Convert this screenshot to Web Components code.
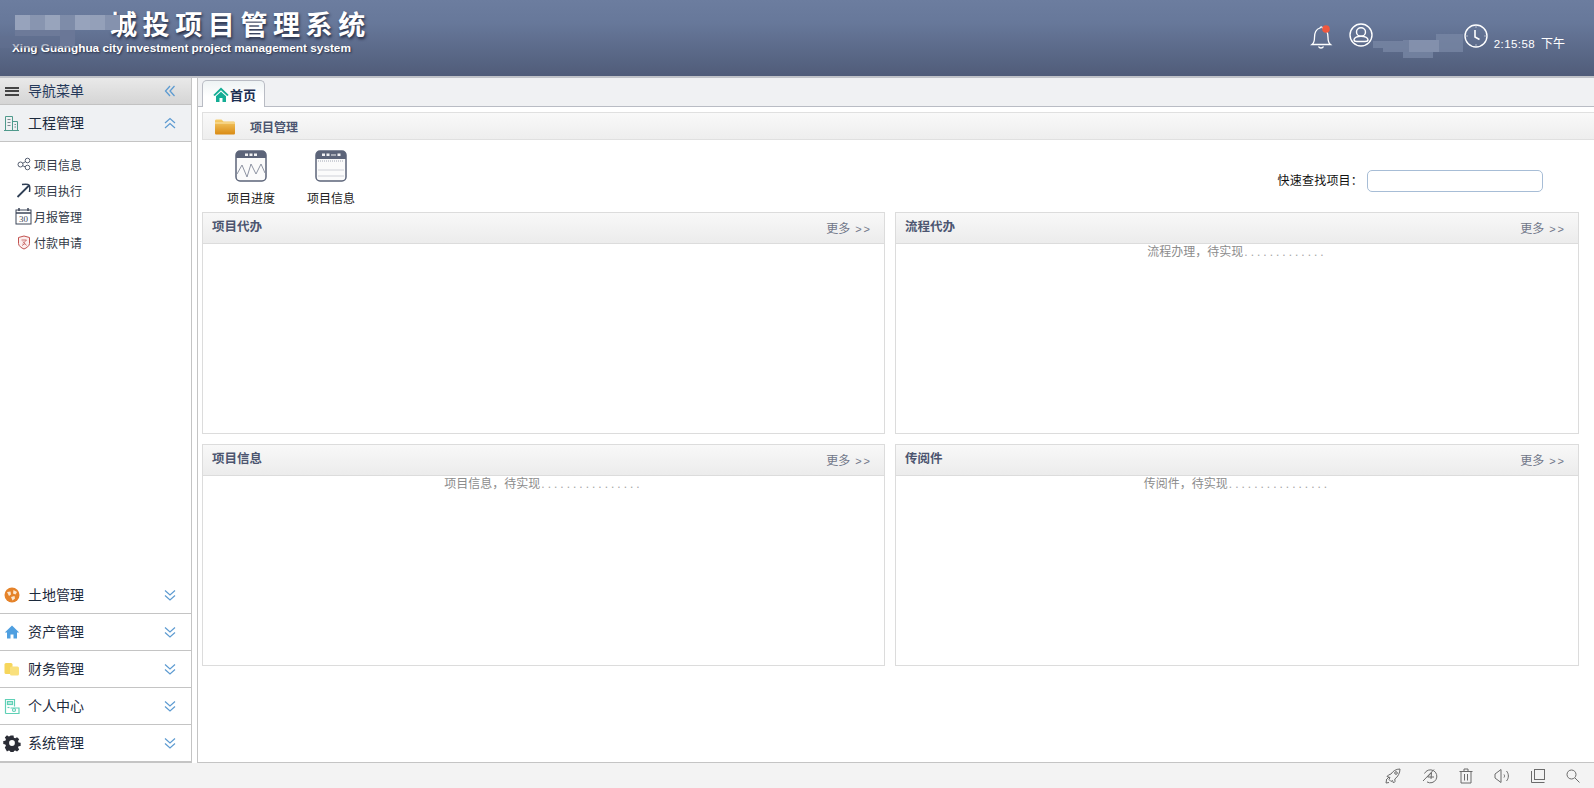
<!DOCTYPE html>
<html lang="zh">
<head>
<meta charset="utf-8">
<title>项目管理系统</title>
<style>
  html, body { margin: 0; padding: 0; height: 100%; overflow: hidden; background: #fff; }
  body { font-family: "Noto Sans CJK SC", "Liberation Sans", sans-serif; font-size: 12px; }
  .page { display: flex; flex-direction: column; height: 788px; }
  .middle { flex: 1; display: flex; min-height: 0; }
</style>
</head>
<body>
<div class="page">
  <app-header></app-header>
  <div class="middle">
    <side-nav>
      <nav-group label="工程管理" open>
        <svg slot="icon" width="18" height="18" viewBox="0 0 18 18" fill="none" stroke="#4f9a8c"><path d="M2.5 16.5V2.5h7v14M9.500 7.500h5v9M1 16.500h15"/><path d="M4.500 5.500h3M4.500 8.500h3M4.500 11.500h3M11.500 10.500h1.500M11.500 13h1.500" stroke="#7a8a90"/></svg>
        <nav-item label="项目信息">
          <svg slot="icon" width="14" height="14" viewBox="0 0 14 14" fill="none" stroke="#555e70"><circle cx="3.500" cy="7.500" r="2.500"/><circle cx="10.500" cy="3.500" r="2.300"/><circle cx="10.500" cy="10.500" r="2.300"/><path d="M5.700 6.300l2.800-1.700M5.700 8.700l2.800 1.300"/></svg>
        </nav-item>
        <nav-item label="项目执行">
          <svg slot="icon" width="16" height="16" viewBox="0 0 16 16" fill="none" stroke="#2f3f55" stroke-width="1.800"><path d="M1.500 15L13 3.500"/><path d="M6 2.500c3.500-.5 6-.5 7 .5s1 3.500.5 7" stroke-width="1.500"/></svg>
        </nav-item>
        <nav-item label="月报管理">
          <svg slot="icon" width="17" height="18" viewBox="0 0 17 18" fill="none" stroke="#3c4658"><rect x="1" y="3" width="15" height="14"/><path d="M1 6h15" stroke-width="1.500"/><path d="M4 1v3M13 1v3" stroke-width="1.500"/><text x="8.500" y="15" text-anchor="middle" font-size="9" font-family="Liberation Serif" fill="#3c4658" stroke="none">30</text></svg>
        </nav-item>
        <nav-item label="付款申请">
          <svg slot="icon" width="14" height="15" viewBox="0 0 14 15" fill="#fbeeee" stroke="#c2524f"><path d="M1.500 2.500l5.500-1.500 5.500 1.500v6c0 2.500-3 4.500-5.500 5.500-2.500-1-5.500-3-5.500-5.500z"/><path d="M4.500 5h5L6 8.500M6 6.500l3.500 4M8 8.500l-3 2" stroke-width=".8" fill="none"/></svg>
        </nav-item>
      </nav-group>
      <nav-group label="土地管理">
        <svg slot="icon" width="16" height="16" viewBox="0 0 16 16"><circle cx="8" cy="8" r="7.500" fill="#e5832a"/><path d="M3 5l3.500-.5.500 3-2 1.500zM9.500 3l3.500 2-1.500 2.500-2.500-1zM7 10l3.500-1 .5 2.500-2.500 2z" fill="#fbe7d0"/></svg>
      </nav-group>
      <nav-group label="资产管理">
        <svg slot="icon" width="16" height="16" viewBox="0 0 16 16" fill="#4f9fe0"><path d="M8 1.500L.8 8.500h2.200v6h3.500v-4h3v4H13v-6h2.200z"/></svg>
      </nav-group>
      <nav-group label="财务管理">
        <svg slot="icon" width="16" height="16" viewBox="0 0 16 16"><rect x=".5" y="2" width="8" height="11" rx="1.500" fill="#f6d65c"/><rect x="6" y="5.500" width="9" height="9" rx="1.500" fill="#f9e07d"/></svg>
      </nav-group>
      <nav-group label="个人中心">
        <svg slot="icon" width="16" height="17" viewBox="0 0 16 17" fill="none" stroke="#5fd0b6" stroke-width="1.200"><path d="M1.500 15.500V1.500h9v7M1.500 15.500h13.500V10H6.500"/><rect x="3.500" y="3.500" width="5" height="3" fill="#bfeee2"/><circle cx="10" cy="12" r="1.500"/><path d="M3.500 9.500h2" /></svg>
      </nav-group>
      <nav-group label="系统管理">
        <svg slot="icon" width="18" height="18" viewBox="0 0 18 18"><path fill="#2b2d36" fill-rule="evenodd" d="M7.300 .8h3.400l.4 2.300 1.500.7 2-1.300 2.400 2.400-1.300 2 .6 1.500 2.300.4v3.400l-2.300.4-.6 1.500 1.300 2-2.400 2.400-2-1.300-1.500.6-.4 2.300H7.300l-.4-2.300-1.500-.6-2 1.300L1 14.100l1.300-2-.7-1.500L-.7 10.200V6.800L1.600 6.400l.7-1.500L1 2.900 3.400 .5l2 1.300 1.500-.7zM9 5.800a3 3 0 1 0 0 6.400 3 3 0 0 0 0-6.400z" transform="translate(.9 .9) scale(.9)"/></svg>
      </nav-group>
    </side-nav>
    <home-main></home-main>
  </div>
  <status-bar></status-bar>
</div>

<script>
  // main page header
  class AppHeader extends HTMLElement {
    constructor() {
      super();
      this.attachShadow({ mode: 'open' });
      this.shadowRoot.innerHTML = `
<style>
  :host { display: flex; flex: none; height: 76px; border-bottom: 2px solid #c0c2c8; color: #fff;
    position: relative; justify-content: space-between;
    background: linear-gradient(#6c7d9f 0, #67789a 30%, #505c79 100%); }
  .brand { padding: 8px 0 0 12px; }
  .title { height: 32px; line-height: 32px; padding-left: 98px; font-size: 27px; font-weight: 700; letter-spacing: 5.600px;
    white-space: nowrap; text-shadow: 1px 2px 3px rgba(20,25,45,.8); font-family: "Noto Sans CJK SC", sans-serif; }
  .sub { font: bold 11.800px/14px "Liberation Sans", sans-serif; margin-top: 1px; text-shadow: 1px 1px 2px rgba(20,25,45,.7); white-space: nowrap; }
  .mosaic { position: absolute; left: 0; top: 12px; }
  .tools { display: flex; align-items: flex-start; padding: 22px 29px 0 0; }
  .bell { margin-right: 15px; }
  .user { margin-top: 1px; }
  .name-mask { width: 90px; margin: 10px 0 0 0; height: 26px; }
  .clock { margin: 2px 0 0 1px; }
  .time { font: 11.500px/14px "Liberation Sans", sans-serif; letter-spacing: .4px; margin: 14px 0 0 6px; white-space: nowrap; }
  .time span { font: 12px/14px "Noto Sans CJK SC", sans-serif; letter-spacing: 0; margin-left: 6px; }
</style>
<div class="brand">
  <div class="title">城投项目管理系统</div>
  <div class="sub">Xing Guanghua city investment project management system</div>
</div>
<svg class="mosaic" width="125" height="36" viewBox="0 0 125 36">
  <rect x="0" y="24" width="75" height="12" fill="#626f90" opacity=".5"/>
  <rect x="15" y="3" width="15" height="15" fill="#97a3bc"/><rect x="30" y="3" width="15" height="15" fill="#8895b0"/>
  <rect x="45" y="3" width="15" height="15" fill="#98a4bc"/><rect x="60" y="3" width="15" height="15" fill="#7e8ca9"/>
  <rect x="75" y="3" width="15" height="15" fill="#97a3bc"/><rect x="90" y="3" width="15" height="15" fill="#94a0b9"/>
  <rect x="105" y="3" width="15" height="15" fill="#8592ae"/><rect x="15" y="18" width="60" height="6" fill="#6d7a99"/>
  <rect x="60" y="18" width="15" height="16" fill="#6a7797"/>
</svg>
<div class="tools">
  <svg class="bell" width="24" height="28" viewBox="0 0 24 28" fill="none" stroke="#fff" stroke-width="1.300">
    <path d="M2 22.500c2-1.500 2.500-3.500 2.500-7 0-5 2-8.500 5.500-9.500.5-1.500 2-1.500 2.500 0 3.500 1 5.500 4.500 5.500 9.500 0 3.500.5 5.500 2.500 7z"/>
    <path d="M8.500 24.500c1 2 4 2 5 0"/>
    <circle cx="16" cy="7" r="3.800" fill="#f0573d" stroke="none"/>
  </svg>
  <svg class="user" width="24" height="24" viewBox="0 0 24 24" fill="none" stroke="#fff" stroke-width="1.400">
    <circle cx="12" cy="12" r="11"/><ellipse cx="12" cy="9" rx="4.500" ry="4.200"/><path d="M12 13.200c-3.500 0-7 1.500-7 3.500 0 1.200 1.500 1.800 3 1.800h8c1.500 0 3-.6 3-1.800 0-2-3.500-3.500-7-3.500z"/>
  </svg>
  <svg class="name-mask" viewBox="0 0 90 26">
    <path d="M0 9h30v-1h33v-6h27v18h-30v6H30v-6H10v-4H0z" fill="#7a88a6" opacity=".75"/>
    <rect x="36" y="8" width="30" height="12" fill="#8a97b2" opacity=".7"/>
  </svg>
  <svg class="clock" width="24" height="24" viewBox="0 0 24 24" fill="none" stroke="#fff">
    <circle cx="12" cy="12" r="11" stroke-width="1.400"/><path d="M11 6v7l4.500 2.500" stroke-width="1.600"/>
    <path d="M12 2.500v1M12 20.500v1M2.500 12h1M20.500 12h1"/>
  </svg>
  <div class="time">2:15:58<span>下午</span></div>
</div>`;
    }
  }
  customElements.define('app-header', AppHeader);

  // left side accordion
  class SideNav extends HTMLElement {
    constructor() {
      super();
      this.attachShadow({ mode: 'open' });
      this.shadowRoot.innerHTML = `
<style>
  :host { display: flex; flex-direction: column; flex: none; width: 191px; border-right: 1px solid #c4c4c4; border-bottom: 1px solid #c4c4c4; background: #fff; }
  .head { flex: none; height: 26px; display: flex; align-items: center; background: linear-gradient(#e9e9e9, #d5d5d5); border-bottom: 1px solid #c2c2c2; color: #234; font-size: 14px; }
  .bars { width: 14px; height: 9px; margin: 0 10px 0 5px; border-top: 2px solid #444; border-bottom: 2px solid #444; position: relative; box-sizing: border-box; }
  .bars::after { content: ""; position: absolute; left: 0; right: 0; top: 1.500px; height: 2px; background: #444; }
  .head span { flex: 1; margin: -2px 0 0 -1px; color: #25395a; }
  .head svg { margin-right: 15px; }
  .list { flex: 1; display: flex; flex-direction: column; min-height: 0; }
</style>
<div class="head"><i class="bars"></i><span>导航菜单</span>
  <svg width="12" height="12" viewBox="0 0 12 12" fill="none" stroke="#5d9bd1" stroke-width="1.300"><path d="M6 1L1.500 6 6 11M10.500 1L6 6l4.500 5"/></svg>
</div>
<div class="list"><slot></slot></div>`;
    }
  }
  customElements.define('side-nav', SideNav);

  class NavGroup extends HTMLElement {
    constructor() {
      super();
      this.attachShadow({ mode: 'open' });
      let open = this.hasAttribute('open');
      let arrow = open ? 'M1 6l5-4.500L11 6M1 11l5-4.500L11 11' : 'M1 1.500l5 4.500 5-4.500M1 6.500l5 4.500 5-4.500';
      this.shadowRoot.innerHTML = `
<style>
  :host { display: flex; flex-direction: column; flex: none; }
  :host([open]) { flex: 1; min-height: 0; }
  .row { flex: none; height: 36px; display: flex; align-items: center; border-bottom: 1px solid #c4c4c4; color: #1c2a3c; font-size: 14px; background: #fff; }
  :host([open]) .row { background: #eff1f3; }
  .label { flex: 1; margin-top: -2px; }
  .ico { display: flex; justify-content: center; flex: none; box-sizing: border-box; width: 23px; margin-right: 5px; }
  .row svg.arrow { margin-right: 15px; }
  .items { flex: 1; padding-top: 9px; }
  :host(:not([open])) .items { display: none; }
</style>
<div class="row"><span class="ico"><slot name="icon"></slot></span><span class="label"></span>
  <svg class="arrow" width="12" height="12" viewBox="0 0 12 12" fill="none" stroke="#5d9bd1" stroke-width="1.200"><path d="${arrow}"/></svg>
</div>
<div class="items"><slot></slot></div>`;
      this.shadowRoot.querySelector('.label').textContent = this.getAttribute('label');
    }
  }
  customElements.define('nav-group', NavGroup);

  class NavItem extends HTMLElement {
    constructor() {
      super();
      this.attachShadow({ mode: 'open' });
      this.shadowRoot.innerHTML = `
<style>
  :host { display: flex; align-items: center; height: 26px; font-size: 12px; color: #333b48; padding-left: 13px; }
  .ico { width: 21px; display: flex; justify-content: center; flex: none; }
</style>
<span class="ico"><slot name="icon"></slot></span><span class="label"></span>`;
      this.shadowRoot.querySelector('.label').textContent = this.getAttribute('label');
    }
  }
  customElements.define('nav-item', NavItem);

  // gray title bar with "more" link over an empty body
  class InfoPanel extends HTMLElement {
    constructor() {
      super();
      this.attachShadow({ mode: 'open' });
      this.shadowRoot.innerHTML = `
<style>
  :host { display: flex; flex-direction: column; height: 222px; border: 1px solid #dcdcdc; box-sizing: border-box; background: #fff; min-width: 0; }
  .top { flex: none; height: 30px; display: flex; justify-content: space-between; background: linear-gradient(#f8f8f8, #ececec); border-bottom: 1px solid #dcdcdc; padding: 0 12px 0 9px; }
  .name { font-size: 12.500px; font-weight: 700; color: #4c5570; line-height: 25px; }
  .more { color: #717789; line-height: 30px; font-size: 12px; }
  .more b { font: 11px "Liberation Sans", sans-serif; letter-spacing: 2px; margin-left: 5px; }
  .body { flex: 1; text-align: center; color: #8c8c8c; font-size: 12px; line-height: 14px; white-space: nowrap; }
  .dots { font: 12px "Liberation Sans", sans-serif; letter-spacing: 3px; color: #a5a5a5; margin-left: 1px; }
</style>
<div class="top"><span class="name"></span><span class="more">更多<b>&gt;&gt;</b></span></div>
<div class="body"></div>`;
      this.shadowRoot.querySelector('.name').textContent = this.getAttribute('title');
      let note = this.getAttribute('note');
      if (note) {
        let b = this.shadowRoot.querySelector('.body');
        b.textContent = note;
        let d = document.createElement('span');
        d.className = 'dots';
        d.textContent = '.'.repeat(Number(this.getAttribute('dots')));
        b.appendChild(d);
      }
    }
  }
  customElements.define('info-panel', InfoPanel);

  class ShortcutBtn extends HTMLElement {
    constructor() {
      super();
      this.attachShadow({ mode: 'open' });
      this.shadowRoot.innerHTML = `
<style>
  :host { display: flex; flex-direction: column; align-items: center; width: 80px; font-size: 12px; color: #222; }
  .label { margin-top: 8px; line-height: 16px; }
  ::slotted(svg) { display: block; }
</style>
<slot></slot><span class="label"></span>`;
      this.shadowRoot.querySelector('.label').textContent = this.getAttribute('label');
    }
  }
  customElements.define('shortcut-btn', ShortcutBtn);

  class HomeMain extends HTMLElement {
    constructor() {
      super();
      this.attachShadow({ mode: 'open' });
      this.shadowRoot.innerHTML = `
<style>
  :host { display: flex; flex-direction: column; flex: 1; min-width: 0; margin-left: 5px; border-left: 1px solid #c4c4c4; border-bottom: 1px solid #c4c4c4; background: #fff; }
  .tabs { flex: none; height: 28px; background: #f0f1f3; border-bottom: 1px solid #b9bcc4; display: flex; align-items: flex-end; padding-left: 4px; }
  .tab { height: 27px; width: 63px; box-sizing: border-box; border: 1px solid #b9bcc4; border-bottom: 0; border-radius: 5px 5px 0 0; margin-bottom: -1px; background: linear-gradient(#eef3f4, #fff 60%);
    display: flex; align-items: center; padding-left: 10px; font-size: 13px; font-weight: 700; color: #1c2f52; gap: 1px; }
  .wrap { flex: 1; padding: 5px 15px 0 4px; display: flex; flex-direction: column; min-height: 0; }
  .section { flex: none; height: 28px; box-sizing: border-box; border: 1px solid #e0e0e0; border-right: 0; background: linear-gradient(#f9f9f9, #eeeeee); display: flex; align-items: center; padding-left: 11px; font-size: 12px; font-weight: 700; color: #4c5570; margin-right: -15px; }
  .section svg { margin-right: 14px; }
  .quick { flex: none; height: 72px; display: flex; padding: 10px 0 0 9px; box-sizing: border-box; }
  .search { margin-left: auto; padding: 20px 36px 0 0; display: flex; align-items: center; height: 22px; font-size: 12px; color: #111; }
  .search span { letter-spacing: .2px; margin-top: -3px; }
  .search input { width: 176px; height: 22px; box-sizing: border-box; border: 1px solid #a7bdd6; border-radius: 5px; margin-left: 4px; background: #fff; padding: 0; outline: 0; }
  .grid { display: grid; grid-template-columns: 683px 1fr; gap: 10px; }
</style>
<div class="tabs"><div class="tab">
  <svg width="16" height="15" viewBox="0 0 16 15" fill="#14ad95"><path d="M8 .5L.3 8l1.500 1L8 3.200 14.200 9l1.500-1z"/><path d="M3 9.300L8 4.700l5 4.600V15H9.500v-4h-3v4H3z"/></svg>
  首页</div></div>
<div class="wrap">
  <div class="section">
    <svg width="22" height="17" viewBox="0 0 22 17"><defs><linearGradient id="f" x1="0" x2="0" y1="0" y2="1"><stop offset="0" stop-color="#f7cf6c"/><stop offset="1" stop-color="#d98a13"/></linearGradient></defs><path d="M1 3c0-1 .5-1.500 1.500-1.500h5L9.500 3.500h10c1 0 1.500.5 1.500 1.500v10c0 1-.5 1.500-1.500 1.500h-17C1.500 16.500 1 16 1 15z" fill="url(#f)"/><path d="M1 5h20" stroke="#fbe6ad"/></svg>
    项目管理</div>
  <div class="quick">
    <shortcut-btn label="项目进度">
      <svg width="32" height="32" viewBox="0 0 32 32"><rect x="1" y="1" width="30" height="30" rx="4" fill="#fbfbfb" stroke="#5c6479" stroke-width="1.500"/><path d="M1 5c0-2.500 1.500-4 4-4h22c2.500 0 4 1.500 4 4v3H1z" fill="#5c6479"/><path d="M10 3.500h3v2.500h-3zM14.500 3.500h3v2.500h-3zM19 3.500h3v2.500h-3z" fill="#f1f1f4"/><path d="M2 24l5-9 5 12 4-13 5 10 5-10 4 9" fill="none" stroke="#8d93a2"/></svg>
    </shortcut-btn>
    <shortcut-btn label="项目信息">
      <svg width="32" height="32" viewBox="0 0 32 32"><rect x="1" y="1" width="30" height="30" rx="4" fill="#fbfbfb" stroke="#5c6479" stroke-width="1.500"/><path d="M1 5c0-2.500 1.500-4 4-4h22c2.500 0 4 1.500 4 4v4H1z" fill="#5c6479"/><path d="M7 3.500h3v2.500H7zM11.500 3.500h3v2.500h-3zM16 4.500h5v1h-5zM22.500 3.500h3v2.500h-3z" fill="#f1f1f4"/><path d="M3 11h26" stroke="#a3a8b5" stroke-dasharray="1 1"/><path d="M3 20h26M3 26h26" stroke="#cfd1d8"/></svg>
    </shortcut-btn>
    <div class="search"><span>快速查找项目：</span><input type="text"></div>
  </div>
  <div class="grid">
    <info-panel title="项目代办"></info-panel>
    <info-panel title="流程代办" note="流程办理，待实现" dots="13"></info-panel>
    <info-panel title="项目信息" note="项目信息，待实现" dots="16"></info-panel>
    <info-panel title="传阅件" note="传阅件，待实现" dots="16"></info-panel>
  </div>
</div>`;
    }
  }
  customElements.define('home-main', HomeMain);

  class StatusBar extends HTMLElement {
    constructor() {
      super();
      this.attachShadow({ mode: 'open' });
      this.shadowRoot.innerHTML = `
<style>
  :host { display: flex; flex: none; height: 25px; background: #f3f3f3; justify-content: flex-end; align-items: center; gap: 21px; padding: 0 14px 0 0; }
  svg { display: block; fill: none; stroke: #6b6b6b; }
</style>
<svg width="16" height="16" viewBox="0 0 16 16"><path d="M15 1c-4 0-7 2-9 5L3.500 7 2 8.500l3 1-1 2 2 2 1.500-1 1 2.500L10 13.500 9.800 11c3-2 5.200-6 5.200-10zM1.500 12L1 15l3-.5M4 9L1 12" /><circle cx="11" cy="5" r="1.300"/></svg>
<svg width="16" height="16" viewBox="0 0 16 16"><path d="M2.500 5.500A6.500 6.500 0 1 1 5 13.900"/><path d="M9 11l.5-6.500-4 4.500h6.500M1 13L12 1.500"/></svg>
<svg width="14" height="16" viewBox="0 0 14 16"><path d="M.500 3.500h13M2 3.500V15h10V3.500M5 3.500V1h4v2.500M5.500 6v6.500M8.500 6v6.500"/></svg>
<svg width="16" height="16" viewBox="0 0 16 16"><path d="M1 6v4l6 4.500v-13zM10 6.500c.7 1 .7 2 0 3M12.500 3c2.500 3 2.500 7 0 10"/></svg>
<svg width="14" height="16" viewBox="0 0 14 16"><rect x="3.500" y="1.500" width="10" height="10"/><path d="M.500 3v11.500h13"/></svg>
<svg width="14" height="14" viewBox="0 0 14 14"><circle cx="5.500" cy="5.500" r="4.500"/><path d="M9 9l4.500 4.500"/></svg>`;
    }
  }
  customElements.define('status-bar', StatusBar);
</script>
</body>
</html>
